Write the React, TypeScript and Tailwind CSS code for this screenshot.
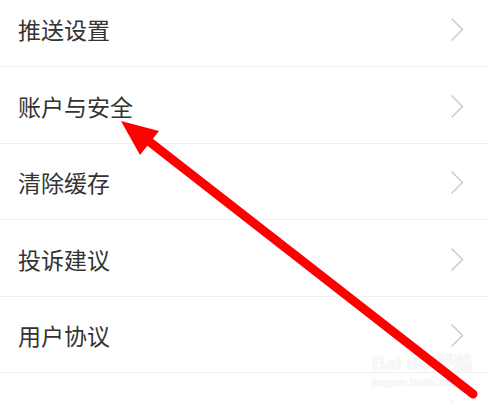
import React from 'react';

const items = ['推送设置', '账户与安全', '清除缓存', '投诉建议', '用户协议', '关于我们'];

const Chevron: React.FC = () => (
  <svg width="14" height="25" viewBox="0 0 14 25" fill="none">
    <path d="M1.5 1.5 L12.5 12.5 L1.5 23.5" stroke="#cccccc" strokeWidth="1.5" />
  </svg>
);

const SettingRow: React.FC<{ label: string }> = ({ label }) => (
  <div className="h-[76.5px] flex items-center justify-between pt-[3px] pl-[18px] pr-[24px] border-b border-[#efefef] bg-white">
    <span className="text-[23px] text-[#333333] leading-none">{label}</span>
    <Chevron />
  </div>
);

export default function App() {
  return (
    <div
      className="relative w-[488px] h-[402px] overflow-hidden bg-white"
      style={{ fontFamily: '"Noto Sans CJK SC", "Noto Sans", sans-serif' }}
    >
      <div className="-mt-[9.5px] flex flex-col">
        {items.map((label) => (
          <SettingRow key={label} label={label} />
        ))}
      </div>

      {/* watermark */}
      <div className="absolute left-[372px] top-[354px] flex flex-col items-start text-white/80 leading-none pointer-events-none [text-shadow:0_0_1px_rgba(170,170,170,0.45)]">
        <span className="text-[19px] font-bold" style={{ fontFamily: '"Liberation Sans", "Noto Sans CJK SC", sans-serif' }}>
          Bai du 经验
        </span>
        <span className="text-[11px] mt-[4px]" style={{ fontFamily: '"Liberation Sans", sans-serif' }}>
          jingyan.baidu.com
        </span>
      </div>

      {/* red arrow annotation */}
      <svg className="absolute inset-0 pointer-events-none" width="488" height="402" viewBox="0 0 488 402">
        <line x1="146" y1="139" x2="473" y2="394" stroke="#ff0000" strokeWidth="9" strokeLinecap="round" />
        <polygon points="121,121 159,131 140,155" fill="#ff0000" />
      </svg>
    </div>
  );
}
